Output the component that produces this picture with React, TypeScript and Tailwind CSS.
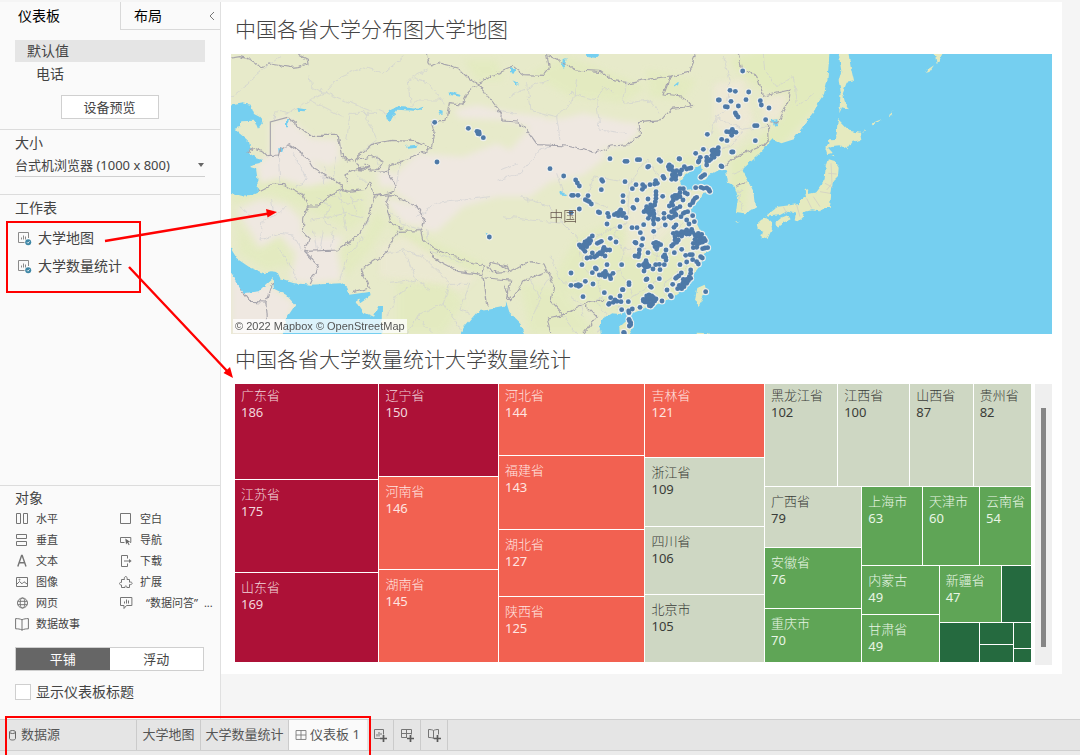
import type { ReactNode } from "react";

/* ---------- icons ---------- */

function Icon({ children, className = "size-[14px]" }: { children: ReactNode; className?: string }) {
  return (
    <svg viewBox="0 0 14 14" fill="none" stroke="#757575" strokeWidth="1" className={`shrink-0 ${className}`} aria-hidden="true">
      {children}
    </svg>
  );
}

const icons = {
  horizontal: <path d="M1.5 1.5h4v10h-4zM8.5 1.5h4v10h-4z" />,
  vertical: <path d="M1.5 1.5h10v4h-10zM1.5 8.5h10v4h-10z" />,
  text: <path d="M2.8 12.5 6.6 1.5h.6l3.800 11M4 8.8h6" strokeWidth="1.4" />,
  image: (
    <>
      <path d="M1.5 2.5h11v9h-11z" />
      <path d="m2 9 2.500-2.500L7 8.800l2-2 3.500 2.500" />
      <circle cx="4.500" cy="4.700" r=".5" />
    </>
  ),
  web: (
    <>
      <circle cx="7.500" cy="7" r="5" />
      <ellipse cx="7.500" cy="7" rx="2.300" ry="5" />
      <path d="M2.800 5.300h9.400M2.800 8.700h9.400" />
    </>
  ),
  story: <path d="M7 2.500v11M7 2.800C5 1.800 3 1.600.600 1.600v10.200c2.400 0 4.400.200 6.400 1.200 2-1 4.400-1.200 6.400-1.200V1.600C11 1.600 9 1.800 7 2.800Z" />,
  blank: <path d="M1.500 1.500h10v10h-10z" />,
  navigate: (
    <>
      <path d="M5.500 9.500h-4v-5h10.300v5H11" />
      <path d="m6.300 5.500.7 6 1.300-1.700 1.500 2.400.8-.5-1.400-2.400 2.100-.400Z" fill="#666" stroke="none" />
    </>
  ),
  download: (
    <>
      <path d="M8.500 4.500v-3h-6v11h6v-3" />
      <path d="M5 7h6" />
      <path d="m10 5 2.700 2L10 9Z" fill="#757575" stroke="none" />
    </>
  ),
  extension: (
    <path d="M2.500 4.500h3c-1.300-3.900 3.700-3.900 2.500 0h2.500v2.700c3.500-1 3.500 3.200 0 2.300v3H7.800c.4-2.200-2.200-2.200-1.800 0H2.500V10C-.5 9.700-.2 7.200 2.500 7.400Z" />
  ),
  ask: (
    <>
      <path d="M1.500 1.500h11.400v8H7.500L5 12.500v-3H1.500z" />
      <path d="M5.500 7.500V5.500M7.500 7.500V3.500M9.500 7.500V4.500" />
    </>
  ),
  grid: <path d="M1.200 1.800h11.600v10.400H1.200zM7 1.800v10.400M1.200 7h11.600" />,
};

function SheetIcon() {
  return (
    <svg viewBox="0 0 15 15" className="size-[15px] shrink-0" fill="none" stroke="#8a8a8a" aria-hidden="true">
      <path d="M7.500 11.500h-6v-10h10v5.500" />
      <path d="M4.500 8.500V6.500M6.500 8.500V4.500M8.500 8.500V5.500" strokeWidth="1" />
      <circle cx="11.200" cy="11.200" r="3" fill="#3f87a6" stroke="none" />
      <path d="m9.900 11.200 1 1 1.700-1.900" stroke="#fff" strokeWidth=".8" />
    </svg>
  );
}

function AddIcon({ kind }: { kind: "sheet" | "dashboard" | "story" }) {
  return (
    <svg viewBox="0 0 14 14" className="size-[14px]" fill="none" stroke="#757575" aria-hidden="true">
      {kind === "sheet" && <path d="M7 10.500H1.500v-9h9v5M4 8.500V6M6 8.500V4M8 7V5" />}
      {kind === "dashboard" && <path d="M7 9.500H1.500v-8h10v5M6.500 1.500v8M1.500 5.500h10" />}
      {kind === "story" && <path d="M6.500 2.500v8M7 10.500c-1-.800-3.500-1-5.500-1v-8c2 0 4 .300 5 1 1-.700 3-1 5-1v5" />}
      <path d="M10.500 7v7M7 10.500h7" strokeWidth="1.700" stroke="#5a5a5a" />
    </svg>
  );
}

/* ---------- map ---------- */

const westDots = "614,217 715,235 741,244 747,246 744,251 748,252 760,263 621,336 778,561";

const eastDots = `728,63 690,121 706,124 746,126 655,150 658,150 693,154 738,149 781,152 784,165 807,174 676,170 682,171 715,168
706,189 709,195 714,201 797,209 764,227 771,227 680,245 697,238 708,247 695,256 688,246 700,246 622,253 665,268 681,272 766,272
695,306 699,306 663,348 666,350 610,298 587,310 601,322 597,332 595,336 620,322 620,333 620,345
655,293 650,300 640,308 648,312 655,305 636,316 642,322 632,328 640,300 654,312 627,332 636,302
330,326 375,334 381,334 412,329 419,329 446,349 443,351 477,329 482,334 537,326 539,327
150,356 191,378 227,390 232,399 238,408 305,389 308,394 304,419 375,395 215,436 220,436 234,436 264,437 256,449 262,452 268,455 274,462
238,477 213,488 505,350 512,355 518,362 525,370 517,375 522,382 528,378 508,345 515,388 527,388 515,350 508,358 530,362 540,366 545,360 553,350 560,357 568,355 573,354 540,372
489,379 492,385 467,392 472,400 464,402 408,404 397,416 428,404 434,410 427,418 450,404 369,437 369,455 411,450 399,472 401,475 444,447 488,439
468,425 468,435 468,445 466,455 464,465 455,472 445,475 438,480 432,485 445,487 455,490 450,495 460,482 462,492 462,502 445,505 448,482 460,510 474,508 440,470 452,465
587,413 603,412 610,415 620,414 626,418 629,424 540,416 550,416 555,428 562,432 540,428 532,436 525,436 518,440 520,450 515,458 508,468 518,466 530,445 540,440 549,450 585,445 580,452 578,458 570,465 590,442
608,378 614,374 603,382 295,486 299,488 323,490 326,500 343,494 350,490 358,485 365,490 371,490 355,497 362,480 367,497 378,503
321,522 360,530 396,533 411,533 431,524 421,548 461,522 461,544 428,566 492,490 492,505 507,500 515,485 522,480 525,490 528,495 520,500 513,504
540,470 543,500 550,490 555,487 563,485 530,475 578,497 560,510 583,515 567,522 528,525 522,532 496,525
520,550 530,548 535,555 525,560 540,550 545,545 550,550 555,545 560,540 566,545 575,538 560,552 545,558 535,570 530,577 520,583 515,588 568,552 525,570
585,555 590,560 595,550 600,560 605,565 598,570 590,575 585,568 612,565 616,572 600,578 580,580 580,593 590,592 592,584 608,596 615,594 623,593 578,547 605,553 608,576
545,598 557,616 570,614 577,614 578,629 560,636 540,644 523,608 498,600 590,635 595,642 602,620 607,624
405,577 425,586 418,600 417,612 405,618 415,620 444,608 461,580 468,577 475,580 482,584 465,590 472,590 470,597 490,620 497,622 498,630 494,615 408,579
331,565 348,576 277,558 268,566 262,572 255,576 262,582 268,580 250,585 238,585 243,592 250,597 255,604 260,590 272,572 292,580 298,577 304,574
329,600 320,600 310,598 308,605 300,608 295,612 290,617 284,621 277,609 272,622 261,624 315,618 305,612 312,592
246,644 213,669 213,706 228,706 235,704 241,706 236,709 256,694 279,702 249,740 286,654 289,657 277,668 321,644 365,644 298,675 305,675 310,670 316,664 315,680 320,673 330,678 332,686 339,670
417,646 430,645 438,632 440,640 436,652 442,650 432,663 447,648 459,657 467,644 478,643 493,644 480,659 434,640
478,686 438,689 441,687 451,709 454,712 518,703 501,720 511,736 514,740 486,753 544,669 530,682 536,678 527,685
572,660 572,670 568,680 572,685 560,688 555,692 550,697 548,702 545,708 540,712 545,716 552,710 533,716 560,700 565,692 538,706 550,688
387,698 387,704 367,719 369,719 360,738 313,728 332,743 345,750 351,754 340,757 363,755 385,755 328,760 326,763
440,738 447,735 455,738 430,748 438,748 446,748 454,748 462,748 468,747 435,756 443,757 450,760 458,757 464,753 452,768 448,767 457,763 445,742 430,753 460,742
420,772 397,777 365,779 386,783 387,788 388,812 392,818 392,824 388,828 387,808 371,847 373,849 617,725`;

const toPoints = (list: string) => list.trim().split(/\s+/).map((pair) => pair.split(",").map(Number));

function Dots({ list }: { list: string }) {
  const points = toPoints(list);
  return (
    <>
      {points.map(([x, y], i) => (
        <circle key={`h${i}`} cx={x} cy={y} r="10.500" fill="#eef0ee" />
      ))}
      {points.map(([x, y], i) => (
        <circle key={`d${i}`} cx={x} cy={y} r="7.300" fill="#4e79a7" />
      ))}
    </>
  );
}

function WorldMap() {
  return (
    <svg viewBox="3 12 2463 840" preserveAspectRatio="xMinYMin slice" className="block h-[280px] w-full" role="img" aria-label="大学地图">
      <defs>
        <filter id="soft" x="-10%" y="-10%" width="120%" height="120%">
          <feGaussianBlur stdDeviation="9" />
        </filter>
        <filter id="rough" filterUnits="userSpaceOnUse" x="-820" y="0" width="3300" height="860">
          <feTurbulence type="fractalNoise" baseFrequency="0.045" numOctaves="3" seed="4" result="n" />
          <feDisplacementMap in="SourceGraphic" in2="n" scale="18" xChannelSelector="R" yChannelSelector="G" />
        </filter>
        <filter id="coast" filterUnits="userSpaceOnUse" x="-820" y="0" width="3300" height="860">
          <feTurbulence type="fractalNoise" baseFrequency="0.06" numOctaves="2" seed="9" result="n" />
          <feDisplacementMap in="SourceGraphic" in2="n" scale="12" xChannelSelector="R" yChannelSelector="G" />
        </filter>
      </defs>

      <rect x="0" y="0" width="2480" height="860" fill="#e7eaca" />

      {/* vegetation */}
      <g fill="#e2ebbd" filter="url(#soft)" opacity=".7">
        <path d="M90 350 200 400 300 400 400 420 410 500 360 540 240 480 120 430 10 460 3 430ZM330 600 400 560 440 480 470 520 420 600 350 680ZM500 700 640 690 700 760 640 852 500 852ZM480 500 600 570 760 640 750 670 600 620 480 530ZM20 520 80 600 150 560 190 640 110 660 30 610Z" />
        <path d="M1010 20 1120 60 1250 110 1180 160 1020 140 900 70ZM1250 60 1400 90 1360 150 1260 140ZM1040 560 1140 520 1230 560 1380 620 1420 700 1300 790 1100 780 960 700ZM870 700 1000 720 1100 852 900 852ZM1290 330 1400 320 1420 360 1320 380ZM700 30 800 30 820 90 740 90Z" />
      </g>
      <path d="M1500 30 1600 0 1820 0 1800 130 1640 300 1560 380 1540 520 1500 500 1500 330 1640 220 1660 140 1600 120 1530 70Z" fill="#e2ebbd" filter="url(#soft)" />

      {/* arid land */}
      <g fill="#efe8e1" filter="url(#soft)">
        <path d="M120 215 172 200 245 265 325 270 330 325 300 350 240 330 310 390 230 410 150 385 90 400 80 345 120 310Z" />
        <path d="M20 480 90 450 170 465 215 510 215 545 235 560 270 560 340 560 320 600 335 690 230 700 180 690 200 610 150 555 90 590 60 540Z" />
        <path d="M500 370 560 310 700 320 800 280 840 300 920 210 1000 205 1060 190 1180 215 1230 220 1225 250 1190 285 1110 300 1130 320 1060 375 960 395 900 440 800 440 700 470 620 545 580 540 550 460 500 430 480 390Z" />
        <path d="M670 180 740 165 850 190 950 200 930 240 820 210 690 205ZM3 650 60 720 110 700 195 760 150 860 3 860ZM455 440 570 470 570 530 520 520 480 470ZM440 360 490 365 490 410 450 410Z" />
      </g>
      <g fill="#efe8d8" filter="url(#soft)" opacity=".8">
        <path d="M450 590 520 560 620 620 740 680 700 720 560 690 450 680ZM1290 420 1340 520 1260 600 1180 620 1200 450Z" opacity=".7" />
        <path d="M1450 100 1540 90 1570 220 1510 290 1450 220ZM1600 150 1680 125 1650 210 1600 210Z" />
      </g>

      {/* faint regional borders */}
      <g fill="none" stroke="#cdced2" strokeWidth="2.600" opacity=".75" filter="url(#rough)">
        <path d="M3 140 60 100 80 70 150 20M130 210 140 180 180 190 240 150 280 170 340 200M240 150 285 130 330 80 400 50 460 70 520 20M240 80 245 110 285 130M400 180 440 270 400 300M440 180 490 200M540 160 535 90 590 60M640 150 560 150 530 180M540 80 600 100 640 160M270 120 340 150 440 190 360 190 350 270" />
        <path d="M145 320 150 400M190 310 230 390 200 410M100 510 150 490 170 470M100 510 90 570 150 550 190 555 215 600M140 590 190 660 200 690M60 500 30 470M250 545 260 600M280 540 270 600M310 545 300 600M130 480 125 450" />
        <path d="M260 440 300 470 280 510 320 540M300 430 350 460 400 450M240 510 300 500 350 490 400 500M330 420 340 480 350 540M360 430 380 490M270 380 320 390M380 370 410 400M400 560 350 620 330 690M420 500 390 550M450 350 440 320M285 350 280 400M320 320 310 380" />
        <path d="M470 480 520 520 500 560M460 610 520 600 560 690 500 740 470 800M520 600 580 620 660 700 640 760 560 800M660 700 720 700 690 780 720 790M480 700 560 690 600 720M530 852 560 800 610 852M640 760 700 852M590 540 600 600 700 640M520 520 570 540" />
        <path d="M560 500 620 460 700 450 780 440M510 330 500 400M800 390 870 370 930 300 960 290M810 360 860 340M820 500 900 510 1000 520 1040 560 1050 620M870 440 960 470 1000 520M980 370 1000 430 1070 450 1130 470M1070 450 1090 380 1200 400 1250 330" />
        <path d="M890 100 900 180 980 200 1030 150 1040 90M980 200 990 270M1020 130 1100 150 1120 110 1150 130M1100 150 1110 240 1190 250M840 140 870 120 960 90M1190 90 1180 160 1260 150 1290 190M860 190 800 180" />
        <path d="M1200 400 1190 520 1150 550 1180 600 1240 590 1280 620 1360 600M1250 330 1290 380 1270 460 1300 520 1270 560 1280 620M1320 460 1380 500 1340 540 1400 570M1180 600 1170 660 1100 690 1060 650 1060 590 1130 540 1190 520M1170 660 1210 740 1160 780M1280 620 1290 690 1210 740M1360 600 1370 650 1300 700 1300 740M1100 690 1120 740 1080 760M960 620 1000 700 1040 690" />
        <path d="M1440 260 1460 200 1490 180 1500 90 1480 20M1460 200 1540 240 1620 230M1430 300 1500 290 1540 240M1600 12 1604 60 1640 110 1690 80 1700 170 1750 130M1520 420 1540 480M1540 420 1500 440M1510 370 1560 350" />
        <path d="M900 690 930 750 900 810M960 680 920 750M1100 760 1130 790 1100 852M1020 740 1050 760 1060 800M1000 800 1040 852" />
      </g>

      {/* water */}
      <g fill="#75cff0" filter="url(#coast)">
        <path d="M-20 170 10 165 40 160 62 165 72 192 88 200 100 214 84 236 74 212 34 214 30 232 14 236 26 248 48 266 60 278 64 294 54 308 78 322 98 328 90 338 62 344 62 352 78 356 82 384 84 428 62 438 34 440 14 434-20 424Z" />
        <path d="M-20 560 22 627 62 654 102 670 122 664 142 666 152 688 192 700 242 704 332 700 352 713 358 734 420 725 422 738 390 760 385 742 380 760 398 786 432 800 448 768 456 768 454 880 150 880 172 800 196 765 168 734 132 716 128 684 106 704 86 724 38 730 24 704 12 684-20 640Z" />
        <path d="M470 208C465 182 485 172 502 170L562 176 580 170 578 178 552 182 502 179 492 194 482 212ZM655 124 690 134 692 140 664 136ZM624 178 638 182 638 194 628 194ZM525 288 560 284 556 294 534 296ZM202 174 226 178 224 184 204 182ZM168 208 176 206 174 232 168 232ZM145 294 160 296 156 308 146 308ZM766 548 776 550 774 556Z" />
        <path d="M675 880 702 832 738 790 748 784 822 770 828 754 838 786 872 820 890 880Z" />
        <path d="M998 30 1010 28 1002 54 996 48ZM1068 12 1110 12 1100 24 1076 22ZM840 52 858 58 850 72 840 66ZM850 94 868 102 860 104ZM1330 108 1344 96 1346 102 1336 114ZM988 424 1008 432 1004 438 990 436Z" />
        <path d="M1118 880 1108 830 1114 808 1144 790 1170 792 1184 780 1212 788 1244 775 1300 757 1334 737 1372 710 1382 684 1412 644 1422 612 1440 594 1426 572 1402 524 1386 492 1382 474 1406 452 1418 432 1444 428 1438 414 1412 410 1392 418 1370 424 1356 408 1350 394 1362 378 1388 360 1412 345 1416 362 1402 388 1422 390 1438 374 1464 360 1480 354 1488 362 1494 398 1508 404 1514 410 1524 442 1518 486 1548 490 1578 472 1574 432 1558 398 1538 362 1542 354 1584 316 1614 282 1628 268 1654 280 1692 268 1722 224 1752 184 1758 168 1782 132 1792 92 1796 44 1800-20 2500-20 2500 880Z" />
        <path d="M1624 210 1642 208 1644 224 1632 228Z" />
      </g>

      {/* islands */}
      <g fill="#e5eabf" filter="url(#coast)">
        <path d="M1168 832 1188 814 1206 816 1208 838 1192 864 1170 864ZM1402 714 1424 704 1427 714 1417 748 1406 768 1395 748ZM1400 848 1436 850 1430 880 1404 880ZM1515 515 1530 512 1524 518Z" />
        <path d="M1824 207 1858 242 1890 248 1894 270 1868 275 1852 298 1828 286 1808 288 1794 293 1808 308 1792 313 1786 293 1798 282 1797 268 1818 267Z" />
        <path d="M1794 327 1814 333 1826 353 1824 378 1809 393 1804 433 1799 474 1784 474 1769 484 1744 481 1722 486 1718 503 1706 514 1694 508 1698 488 1674 482 1650 495 1606 501 1614 493 1644 470 1690 464 1704 462 1714 447 1728 437 1724 420 1734 418 1736 432 1759 427 1774 407 1784 387 1787 347Z" />
        <path d="M1636 518 1654 503 1674 495 1682 508 1660 518 1642 532ZM1580 522 1594 509 1608 504 1624 514 1626 538 1612 568 1594 562 1600 542 1584 538Z" />
        <path d="M1824 0 1854 0 1862 50 1872 94 1850 98 1838 128 1844 153 1856 178 1836 172 1828 190 1832 122 1826 92 1834 62ZM2112 0 2144 0 2120 42ZM2088 68 2094 58 2112 46 2098 66ZM1924 226 1934 216 1954 208 1944 216 1930 226ZM1974 198 1990 184 1984 196ZM1896 248 1910 236 1904 246ZM1802 316 1814 318 1806 322Z" />
      </g>
      <path d="M1795 370 1820 372M1803 340 1806 400 1790 420M1770 425 1800 430M1750 440 1770 470M1730 445 1745 475M1700 465 1710 500M1660 470 1670 490M1785 400 1808 412" stroke="#d2d0c4" strokeWidth="2.500" fill="none" />

      {/* country borders */}
      <g fill="none" stroke="#a6a4ac" strokeWidth="3.400" strokeLinejoin="round" filter="url(#rough)">
        <path d="M3 24 30 20 60 28 90 50 120 42 182 52 204 50 234 42 232 28 208 16M588 12 602 48 624 38 684 54 718 88 745 98 784 78 850 50 880 74 940 76 958 54 950 12M955 18 1040 60 1110 64 1150 92 1196 98 1250 88 1322 78 1374 68 1398 12M1322 78 1302 132 1352 138 1388 168 1356 172 1322 175 1292 212 1228 218 1228 254 1198 284 1142 288 1094 308 1012 288 922 284 894 244 862 216 812 213 814 188 778 144 745 98" />
        <path d="M745 98 714 128 698 162 658 158 648 214 604 218 612 244 604 296 534 326 478 348 474 368 498 404 494 424 434 438M604 296 564 275 484 271 424 284 374 328 388 354 444 358 458 334 424 318 374 328M350 404 348 374 384 358 420 350 400 340M380 358 474 368M50 309 74 293 98 303 114 320 148 318 153 298 178 284 234 324 254 358 334 404 334 419 304 434 264 468 234 468" />
        <path d="M334 419 358 424 404 418 422 394 434 438 418 494 388 554 324 600 224 604 238 564 218 544 218 504 234 468 218 434 164 404 124 402 86 422M224 604 264 644 238 702M434 438 484 434 554 464 582 504 572 542 504 544 464 614 394 658 418 714 368 728M480 434 470 470 482 520 515 536" />
        <path d="M572 542 578 568 608 594 684 624 764 648 758 674 684 664 608 624 604 602M774 654 784 638 832 648 838 664 784 668ZM758 674 774 770M764 684 842 690 832 750M812 644 842 664 902 632 942 642 952 664 972 704 962 752 1002 794 1062 762 1122 748M822 704 842 752 882 692 952 664M1002 794 952 804 962 852M1062 762 1100 800 1060 852M28 718 58 754 108 756 128 694M108 756 112 806" />
        <path d="M1525 12 1534 54 1584 84 1600 138 1602 138 1682 120 1676 154 1646 218 1612 210 1614 268 1596 288 1512 322 1482 352M1518 408 1552 396" />
      </g>
      <path d="M121 316V216L172 202" fill="none" stroke="#a6a4ac" strokeWidth="3.400" />
      <path d="M172 202 240 256 325 256 335 322 368 336" fill="none" stroke="#a6a4ac" strokeWidth="3.400" filter="url(#rough)" />

      <Dots list={westDots} />
      <g transform="translate(810 0)">
        <Dots list={eastDots} />
      </g>
      <text x="958" y="512" fontSize="42" fill="#65564c" className="font-['Noto_Sans_CJK_SC',sans-serif] font-light">
        中国
      </text>
    </svg>
  );
}

/* ---------- treemap ---------- */

type Tone = "crimson" | "coral" | "sage" | "green" | "forest";
type Leaf = { size: number; tone: Tone; name?: string; value?: number; first?: boolean };
type Group = { size: number; dir: "row" | "col"; items: TreeNode[] };
type TreeNode = Leaf | Group;

const tones: Record<Tone, string> = {
  crimson: "bg-[#ad1137] text-[#f2d6dc]",
  coral: "bg-[#f26151] text-[#ffe4e0]",
  sage: "bg-[#ced7c3] text-[#3a3c38]",
  green: "bg-[#5fa556] text-[#e8f5e5]",
  forest: "bg-[#256a3f] text-white",
};

const leaf = (size: number, tone: Tone, name?: string, value?: number, first = false): Leaf => ({ size, tone, name, value, first });
const col = (size: number, ...items: TreeNode[]): Group => ({ size, dir: "col", items });
const row = (size: number, ...items: TreeNode[]): Group => ({ size, dir: "row", items });

const provinces = row(
  1,
  col(144, leaf(95, "crimson", "广东省", 186, true), leaf(92, "crimson", "江苏省", 175), leaf(89, "crimson", "山东省", 169)),
  col(119, leaf(92, "crimson", "辽宁省", 150, true), leaf(93, "coral", "河南省", 146), leaf(92, "coral", "湖南省", 145)),
  col(146, leaf(71, "coral", "河北省", 144, true), leaf(74, "coral", "福建省", 143), leaf(66, "coral", "湖北省", 127), leaf(65, "coral", "陕西省", 125)),
  col(119, leaf(73, "coral", "吉林省", 121, true), leaf(69, "sage", "浙江省", 109), leaf(67, "sage", "四川省", 106), leaf(67, "sage", "北京市", 105)),
  col(
    267,
    row(102, leaf(73, "sage", "黑龙江省", 102, true), leaf(72, "sage", "江西省", 100, true), leaf(63, "sage", "山西省", 87, true), leaf(58, "sage", "贵州省", 82, true)),
    row(
      175,
      col(97, leaf(61, "sage", "广西省", 79), leaf(60, "green", "安徽省", 76), leaf(54, "green", "重庆市", 70)),
      col(
        170,
        row(78, leaf(61, "green", "上海市", 63), leaf(57, "green", "天津市", 60), leaf(52, "green", "云南省", 54)),
        row(
          97,
          col(77, leaf(49, "green", "内蒙古", 49), leaf(48, "green", "甘肃省", 49)),
          col(
            92,
            row(57, leaf(62, "green", "新疆省", 47), leaf(29, "forest")),
            row(39, leaf(40, "forest"), col(34, leaf(21, "forest"), leaf(17, "forest")), col(17, leaf(25, "forest"), leaf(13, "forest")))
          )
        )
      )
    )
  )
);

function TreeCell({ node }: { node: TreeNode }) {
  const grow = { flexGrow: node.size };
  if ("items" in node) {
    return (
      <div style={grow} className={`flex min-h-0 min-w-0 basis-0 gap-px ${node.dir === "row" ? "flex-row" : "flex-col"}`}>
        {node.items.map((child, i) => (
          <TreeCell key={i} node={child} />
        ))}
      </div>
    );
  }
  return (
    <div style={grow} className={`min-h-0 min-w-0 basis-0 overflow-hidden whitespace-nowrap text-[13px] leading-[17px] ${tones[node.tone]}`}>
      {node.name && (
        <div className={node.first ? "px-1.5 pt-[3px]" : "px-1.5 pt-1.5"}>
          <div className="font-light">{node.name}</div>
          <div>{node.value}</div>
        </div>
      )}
    </div>
  );
}

/* ---------- side panel ---------- */

const leftObjects: [ReactNode, string][] = [
  [icons.horizontal, "水平"],
  [icons.vertical, "垂直"],
  [icons.text, "文本"],
  [icons.image, "图像"],
  [icons.web, "网页"],
  [icons.story, "数据故事"],
];
const rightObjects: [ReactNode, string][] = [
  [icons.blank, "空白"],
  [icons.navigate, "导航"],
  [icons.download, "下载"],
  [icons.extension, "扩展"],
  [icons.ask, "“数据问答”"],
];

function ObjectList({ items }: { items: [ReactNode, string][] }) {
  return (
    <ul>
      {items.map(([icon, label]) => (
        <li key={label}>
          <button type="button" className="flex h-[21px] items-center gap-[7px] whitespace-nowrap text-[11px]">
            <Icon>{icon}</Icon>
            {label.startsWith("“") ? (
              <span className="flex gap-1.5 pl-1.5">
                <span>{label}</span>
                <span>...</span>
              </span>
            ) : (
              <span>{label}</span>
            )}
          </button>
        </li>
      ))}
    </ul>
  );
}

function Sidebar() {
  return (
    <aside className="flex w-[221px] shrink-0 flex-col border-r border-[#e0e0e0] bg-[#fafafa] text-sm text-[#444]">
      <div className="flex h-7 text-black">
        <button type="button" className="w-[120px] pl-[18px] text-left">
          仪表板
        </button>
        <button type="button" className="flex flex-1 items-center justify-between border-b border-l border-[#d9d9d9] pl-[13px] pr-1">
          布局
          <svg viewBox="0 0 8 10" className="h-[10px] w-2" fill="none" stroke="#777" aria-hidden="true">
            <path d="M6 1 2 5l4 4" />
          </svg>
        </button>
      </div>

      <div className="flex flex-col px-[15px] pt-2.5">
        <button type="button" className="h-[22px] bg-[#e5e5e5] pl-3 text-left leading-[22px]">
          默认值
        </button>
        <button type="button" className="h-6 pl-[21px] text-left leading-6">
          电话
        </button>
        <button type="button" className="mr-px mt-[9px] h-6 w-[98px] self-center border border-[#d0d0d0] bg-white text-[13px] leading-[22px]">
          设备预览
        </button>
      </div>

      <section className="mt-2.5 h-[65px] border-t border-[#dcdcdc] px-[15px] pt-[3px]">
        <label htmlFor="size" className="block leading-5">
          大小
        </label>
        <div className="relative flex items-center border-b border-[#cfcfcf]">
          <select id="size" className="h-[23px] w-full appearance-none bg-transparent pt-px text-[13px]">
            <option>台式机浏览器 (1000 x 800)</option>
          </select>
          <span className="pointer-events-none absolute right-px border-x-[3px] border-t-4 border-x-transparent border-t-[#666]" />
        </div>
      </section>

      <section className="border-t border-[#dcdcdc] pt-[3px]">
        <h2 className="px-[15px] leading-5">工作表</h2>
        <ul className="mt-1.5">
          {["大学地图", "大学数量统计"].map((name) => (
            <li key={name} className="flex h-7 items-center gap-1.5 pl-[17px]">
              <SheetIcon />
              {name}
            </li>
          ))}
        </ul>
      </section>

      <section className="mt-auto border-t border-[#dcdcdc] px-[15px] pb-[17px] pt-0.5">
        <h2 className="leading-5">对象</h2>
        <div className="grid grid-cols-[104px_1fr]">
          <ObjectList items={leftObjects} />
          <ObjectList items={rightObjects} />
        </div>
        <div className="mr-px mt-[13px] grid h-6 grid-cols-2 border border-[#cfcfcf] text-[13px]">
          <button type="button" className="bg-[#666] text-white">
            平铺
          </button>
          <button type="button" className="bg-white">
            浮动
          </button>
        </div>
        <div className="mt-[11px] flex h-5 items-center gap-[5px]">
          <input id="show-title" type="checkbox" className="size-4 appearance-none border border-[#cfcfcf] bg-white" />
          <label htmlFor="show-title">显示仪表板标题</label>
        </div>
      </section>
    </aside>
  );
}

/* ---------- sheet tabs ---------- */

function SheetTabs() {
  return (
    <footer className="relative h-9 shrink-0 overflow-hidden border-t border-[#cfcfcf] bg-[#ebebeb]">
      <nav className="flex h-[31px] border-b border-[#d0d0d0] bg-[#e5e5e5] text-[13px] text-[#555]">
        <button type="button" className="flex w-[137px] items-center gap-1 border-r border-[#cbcbcb] pl-2">
          <svg viewBox="0 0 9 12" className="h-3 w-[9px]" fill="none" stroke="#666" aria-hidden="true">
            <ellipse cx="4.500" cy="3" rx="3" ry="1.500" />
            <path d="M1.500 3v6.500c0 2 6 2 6 0V3" />
          </svg>
          数据源
        </button>
        <button type="button" className="w-16 whitespace-nowrap border-r border-[#cbcbcb]">
          大学地图
        </button>
        <button type="button" className="w-[88px] whitespace-nowrap border-r border-[#cbcbcb]">
          大学数量统计
        </button>
        <button type="button" aria-current="page" className="flex w-[78px] items-center gap-[3px] whitespace-nowrap bg-[#fafafa] pl-1.5">
          <Icon className="size-3">{icons.grid}</Icon>
          仪表板 1
        </button>
        <button type="button" aria-label="新建工作表" className="flex w-[27px] items-center justify-center border-r border-[#cbcbcb]">
          <AddIcon kind="sheet" />
        </button>
        <button type="button" aria-label="新建仪表板" className="flex w-[27px] items-center justify-center border-r border-[#cbcbcb]">
          <AddIcon kind="dashboard" />
        </button>
        <button type="button" aria-label="新建故事" className="flex w-[27px] items-center justify-center border-r border-[#cbcbcb]">
          <AddIcon kind="story" />
        </button>
      </nav>
    </footer>
  );
}

export default function App() {
  return (
    <div className="relative flex min-h-screen flex-col overflow-hidden bg-[#f5f5f5] pt-0.5 font-['Noto_Sans','Noto_Sans_CJK_SC',sans-serif]">
      <div className="flex flex-1">
        <Sidebar />
        <main className="min-w-0 flex-1 pr-[18px]">
          <div className="bg-white px-2.5 pb-[9px] text-[#444]">
            <h1 className="flex h-[52px] items-center pl-1 pt-1 text-[21px] font-light">中国各省大学分布图大学地图</h1>
            <div className="relative">
              <WorldMap />
              <p className="absolute bottom-px left-0.5 bg-white/75 px-0.5 font-['Liberation_Sans',sans-serif] text-[11px] leading-[14px] text-[#555]">
                © 2022 Mapbox © OpenStreetMap
              </p>
            </div>
            <h1 className="flex h-[50px] items-center pl-1 pt-0.5 text-[21px] font-light">中国各省大学数量统计大学数量统计</h1>
            <div className="flex gap-1 pl-1">
              <div className="flex h-[278px] min-w-0 flex-1">
                <TreeCell node={provinces} />
              </div>
              <div className="flex h-[281px] w-[17px] justify-center bg-[#efefef] pt-6">
                <div className="h-[239px] w-[5px] bg-[#868686]" />
              </div>
            </div>
          </div>
        </main>
      </div>
      <SheetTabs />

      {/* annotations */}
      <div className="pointer-events-none absolute left-1.5 top-[221px] h-[72px] w-[135px] border-2 border-[#ff0000]" />
      <div className="pointer-events-none absolute -bottom-1 left-[5px] h-[43px] w-[366px] border-2 border-[#ff0000]" />
      <svg viewBox="0 0 300 400" className="pointer-events-none absolute left-0 top-0 h-[400px] w-[300px]" aria-hidden="true">
        <g stroke="#ff0000" strokeWidth="2.400" fill="#ff0000">
          <path d="M105 241 269 213.500M129 267 228 372" />
          <path d="m277 212-11-3 1.500 8.500ZM233 378l-3-11-6.500 6Z" stroke="none" />
        </g>
      </svg>
    </div>
  );
}
